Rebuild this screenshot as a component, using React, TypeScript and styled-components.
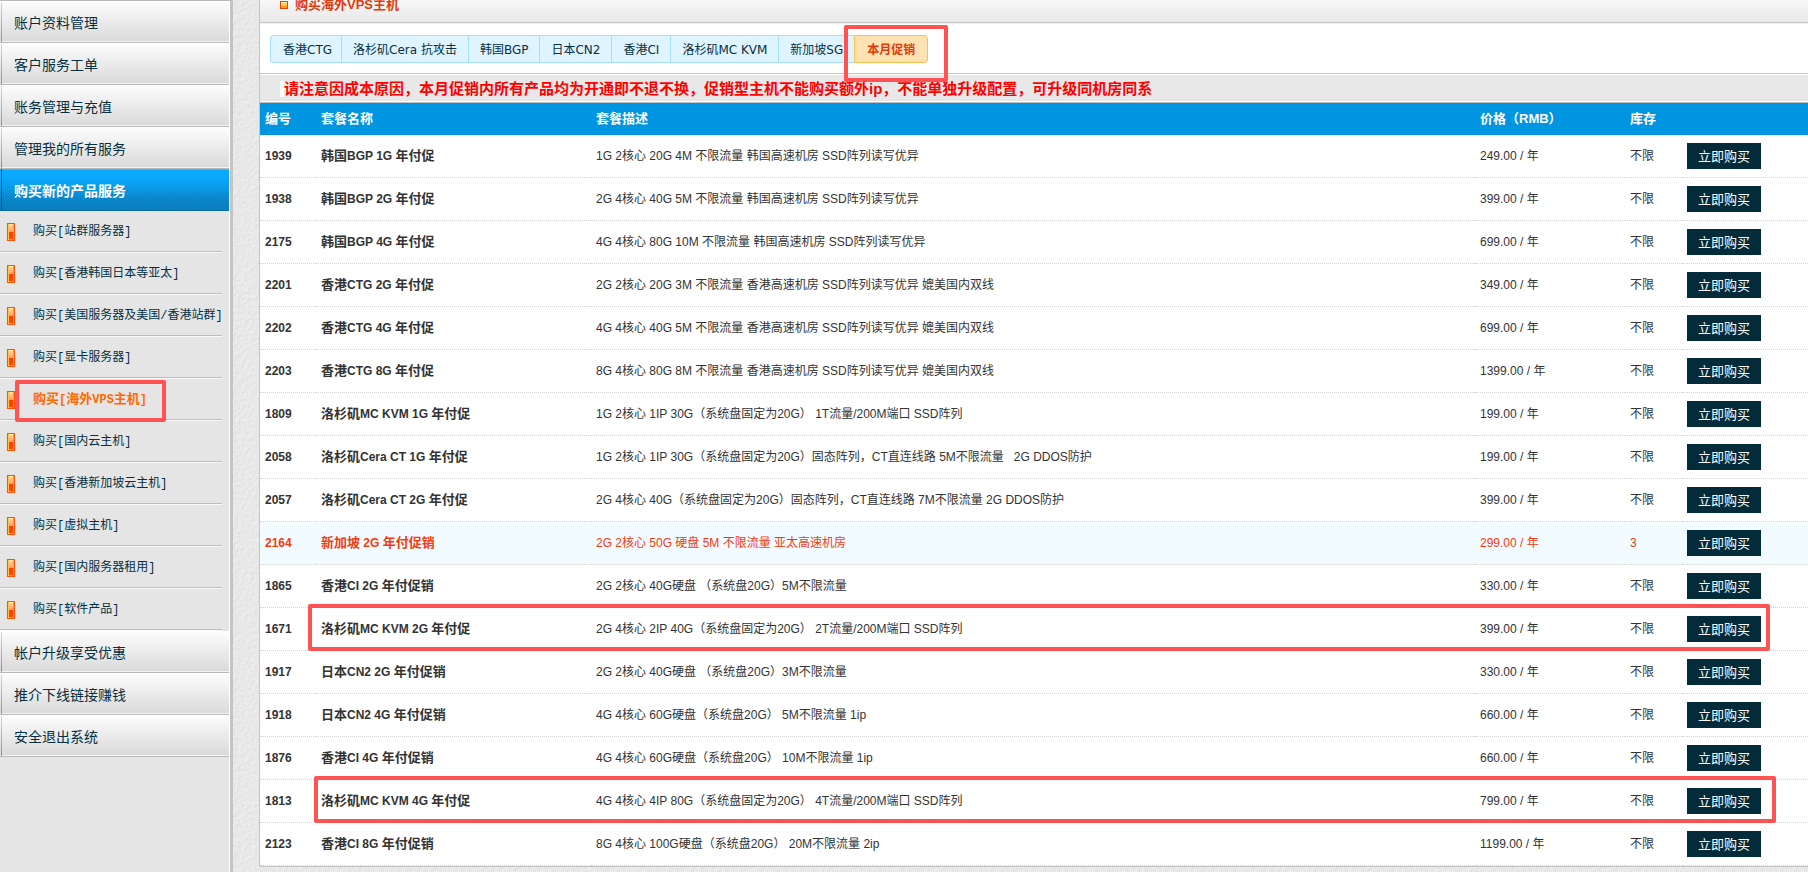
import React from 'react';
import styled, { createGlobalStyle, css } from 'styled-components';

const latin = '"Liberation Sans", "Noto Sans CJK SC", sans-serif';
const cjk = '"Noto Sans CJK SC", sans-serif';

const GlobalStyle = createGlobalStyle`
  * { box-sizing: border-box; }
  html, body, #root { min-height: 100vh; }
  body {
    margin: 0;
    background: #e8e8e8;
    color: #333;
    font: 12px/20px ${latin};
    overflow-x: hidden;
  }
  a { color: inherit; text-decoration: none; }
`;

const Page = styled.div`
  position: relative;
  display: flex;
  align-items: stretch;
  min-height: 100vh;
`;

const Texture = styled.svg`
  position: absolute;
  inset: 0;
  width: 100%;
  height: 100%;
  z-index: -1;
`;

const Sidebar = styled.aside`
  flex: none;
  width: 233px;
  background: #e5e5e5;
  border-top: 1px solid #b9b9b9;
  border-right: 3px solid #c4c4c4;
  box-shadow: inset -1px 0 #fff;
  padding-right: 1px;
`;

const NavLink = styled.a<{ $active?: boolean }>`
  position: relative;
  display: flex;
  align-items: center;
  height: 42px;
  padding-left: 14px;
  color: #06303f;
  font: 14px/20px ${cjk};
  background: linear-gradient(#fdfdfd, #d9d9d9);
  border-bottom: 1px solid #b9b9b9;
  box-shadow: inset 0 -1px #f4f4f4, inset 0 1px #fff;

  &::before {
    content: '';
    position: absolute;
    left: 1px;
    top: 1px;
    bottom: 0;
    width: 1px;
    background: linear-gradient(#b8e0f4, #4aa5dc);
  }

  ${(p) => p.$active && css`
    color: #fff;
    font-weight: bold;
    background:
      linear-gradient(#09aaff 15%, rgba(9, 170, 255, 0) 70%),
      linear-gradient(135deg, transparent 40%, rgba(0, 50, 100, 0.24) 40% 60%, transparent 60%) 0 0 / 3px 3px,
      linear-gradient(#0ba6f8, #0a84c6);
    border-bottom-color: #0b6ca5;
    box-shadow: inset 0 1px #2cc3f5;
    &::before { background: #0b3be0; top: 0; }
  `}
`;

const SubList = styled.ul`
  list-style: none;
  margin: 0;
  padding: 0 7px 0 0;
`;

const SubItem = styled.li`
  position: relative;
  height: 42px;
  border-bottom: 1px solid #f8f8f8;
  box-shadow: inset 0 -1px #bdbdbd;
`;

const SubLink = styled.a<{ $active?: boolean }>`
  display: flex;
  align-items: center;
  gap: 18px;
  height: 41px;
  padding-left: 7px;
  white-space: nowrap;
  font: 12px/20px "Liberation Mono", "Noto Sans CJK SC", monospace;
  font-weight: ${(p) => (p.$active ? 'bold' : 'normal')};
  color: ${(p) => (p.$active ? '#ff6a00' : '#06303f')};
`;

const Bullet = styled.i`
  flex: none;
  width: 8px;
  height: 18px;
  border: 1px solid #ff5500;
  background: linear-gradient(#ffd9b0, #ff9a66 50%, #ff3c00 50%, #ff4a00);
  box-shadow: inset 1px 0 #ffc33c, inset -1px 0 #ffa030, inset 0 1px #fff0a0, inset 0 -1px #ffa010;
`;

const SubText = styled.span`
  padding-top: 1px;
`;

const Mark = styled.span<{ $top: number; $bottom: number; $left: number; $right: number }>`
  position: absolute;
  top: ${(p) => p.$top}px;
  bottom: ${(p) => p.$bottom}px;
  left: ${(p) => p.$left}px;
  right: ${(p) => p.$right}px;
  border: 4px solid #ff5353;
  border-radius: 2px;
  pointer-events: none;
  z-index: 2;
`;

const Main = styled.main`
  flex: 1;
  min-width: 0;
  margin-left: 26px;
  align-self: flex-start;
  background: #fff;
  border-left: 1px solid #c4c4c4;
  border-bottom: 1px solid #c4c4c4;
`;

const TitleBar = styled.header`
  display: flex;
  align-items: flex-start;
  gap: 7px;
  height: 23px;
  padding-left: 20px;
  background: linear-gradient(#f7f7f7, #e8e8e8);
  border-bottom: 1px solid #c6c6c6;
  box-shadow: 0 1px #f0f0f0;
`;

const TitleIcon = styled.i`
  width: 8px;
  height: 8px;
  margin-top: 1px;
  border: 1px solid #d9480f;
  background: #ffc94a;
  box-shadow: inset 0 -2px #ff9a1a, inset 0 1px #fff0b0;
`;

const Title = styled.h1`
  margin: 0;
  font: bold 13px/10px ${latin};
  color: #e23a0b;
`;

const Tabs = styled.nav`
  display: flex;
  padding: 12px 10px 10px;
`;

const Tab = styled.a<{ $active?: boolean }>`
  position: relative;
  height: 28px;
  padding: 1px 11px 0;
  font: 12px/26px "DejaVu Sans", "Noto Sans CJK SC", sans-serif;
  white-space: nowrap;
  color: #06303f;
  background: #def4ff;
  border: 1px solid #a5dffb;
  border-right-width: 0;
  &:first-child { border-radius: 4px 0 0 4px; padding: 1px 9px 0 12px; }
  &:last-child { border-radius: 0 4px 4px 0; border-right-width: 1px; }

  ${(p) => p.$active && css`
    padding: 1px 12px 0;
    color: #e23a0b;
    font-weight: bold;
    background: #ffe2b2;
    border-color: #ffbd50;
  `}
`;

const Notice = styled.p`
  margin: 0;
  height: 30px;
  padding: 1px 0 0 20px;
  background: #e8e8e8;
  border-top: 1px solid #c4c4c4;
  border-bottom: 1px solid #bdbdbd;
  box-shadow: inset 0 1px #fff, inset 0 -1px #fff;
  font: bold 15px/27px ${latin};
  color: #f00;
  white-space: pre;
  display: flex;
  align-items: center;
`;

const NoticePad = styled.span`
  width: 4px;
  height: 16px;
  background: #fff;
`;

const Table = styled.table`
  width: 100%;
  table-layout: fixed;
  border-collapse: separate;
  border-spacing: 0;
`;

const Col = styled.col<{ $w?: number }>`
  ${(p) => p.$w && `width: ${p.$w}px;`}
`;

const Th = styled.th`
  height: 32px;
  padding: 0 5px;
  text-align: left;
  font: bold 13px/20px ${latin};
  color: #fff;
  background: #0095e0;
`;

const Row = styled.tr<{ $hot?: boolean }>`
  position: relative;
  color: ${(p) => (p.$hot ? '#f43b10' : '#333')};
  background: ${(p) => (p.$hot ? '#f2fbff' : '#fff')};
`;

const Td = styled.td<{ $bold?: boolean }>`
  height: 43px;
  padding: 0 5px;
  border-bottom: 1px dotted #d4d4d4;
  font-weight: ${(p) => (p.$bold ? 'bold' : 'normal')};
  white-space: pre;
`;

const Wide = styled.span`
  font-size: 13px;
`;

const Buy = styled.button`
  display: block;
  width: 74px;
  height: 26px;
  padding: 0;
  border: 0;
  background: #032b3a;
  color: #fff;
  font: 13px/20px ${cjk};
  cursor: pointer;
`;

type Plan = [id: string, name: string, desc: string, price: string, stock?: string];

const plans: Plan[] = [
  ['1939', '韩国BGP 1G 年付促', '1G 2核心 20G 4M 不限流量 韩国高速机房 SSD阵列读写优异', '249.00'],
  ['1938', '韩国BGP 2G 年付促', '2G 4核心 40G 5M 不限流量 韩国高速机房 SSD阵列读写优异', '399.00'],
  ['2175', '韩国BGP 4G 年付促', '4G 4核心 80G 10M 不限流量 韩国高速机房 SSD阵列读写优异', '699.00'],
  ['2201', '香港CTG 2G 年付促', '2G 2核心 20G 3M 不限流量 香港高速机房 SSD阵列读写优异 媲美国内双线', '349.00'],
  ['2202', '香港CTG 4G 年付促', '4G 4核心 40G 5M 不限流量 香港高速机房 SSD阵列读写优异 媲美国内双线', '699.00'],
  ['2203', '香港CTG 8G 年付促', '8G 4核心 80G 8M 不限流量 香港高速机房 SSD阵列读写优异 媲美国内双线', '1399.00'],
  ['1809', '洛杉矶MC KVM 1G 年付促', '1G 2核心 1IP 30G（系统盘固定为20G） 1T流量/200M端口 SSD阵列', '199.00'],
  ['2058', '洛杉矶Cera CT 1G 年付促', '1G 2核心 1IP 30G（系统盘固定为20G）固态阵列，CT直连线路 5M不限流量   2G DDOS防护', '199.00'],
  ['2057', '洛杉矶Cera CT 2G 年付促', '2G 4核心 40G（系统盘固定为20G）固态阵列，CT直连线路 7M不限流量 2G DDOS防护', '399.00'],
  ['2164', '新加坡 2G 年付促销', '2G 2核心 50G 硬盘 5M 不限流量 亚太高速机房', '299.00', '3'],
  ['1865', '香港CI 2G 年付促销', '2G 2核心 40G硬盘 （系统盘20G）5M不限流量', '330.00'],
  ['1671', '洛杉矶MC KVM 2G 年付促', '2G 4核心 2IP 40G（系统盘固定为20G） 2T流量/200M端口 SSD阵列', '399.00'],
  ['1917', '日本CN2 2G 年付促销', '2G 2核心 40G硬盘 （系统盘20G）3M不限流量', '330.00'],
  ['1918', '日本CN2 4G 年付促销', '4G 4核心 60G硬盘（系统盘20G） 5M不限流量 1ip', '660.00'],
  ['1876', '香港CI 4G 年付促销', '4G 4核心 60G硬盘（系统盘20G） 10M不限流量 1ip', '660.00'],
  ['1813', '洛杉矶MC KVM 4G 年付促', '4G 4核心 4IP 80G（系统盘固定为20G） 4T流量/200M端口 SSD阵列', '799.00'],
  ['2123', '香港CI 8G 年付促销', '8G 4核心 100G硬盘（系统盘20G） 20M不限流量 2ip', '1199.00'],
];

// Distance of a highlight frame from the row's left and right edges.
const marked: Record<string, [left: number, right: number]> = {
  '1671': [48, 38],
  '1813': [54, 32],
};

const menuTop = ['账户资料管理', '客户服务工单', '账务管理与充值', '管理我的所有服务'];
const menuBottom = ['帐户升级享受优惠', '推介下线链接赚钱', '安全退出系统'];
const products = [
  '站群服务器', '香港韩国日本等亚太', '美国服务器及美国/香港站群', '显卡服务器', '海外VPS主机',
  '国内云主机', '香港新加坡云主机', '虚拟主机', '国内服务器租用', '软件产品',
];
const tabs = ['香港CTG', '洛杉矶Cera 抗攻击', '韩国BGP', '日本CN2', '香港CI', '洛杉矶MC KVM', '新加坡SG', '本月促销'];

// In bold text, Chinese runs are set one step larger than the Latin ones.
function BoldText({ text }: { text: string }) {
  return (
    <>
      {text.split(/([\u4e00-\u9fff]+)/).map((run, i) => (i % 2 ? <Wide key={i}>{run}</Wide> : run))}
    </>
  );
}

export default function App() {
  return (
    <>
      <GlobalStyle />
      <Page>
        <Texture aria-hidden="true">
          <filter id="paper" x="0" y="0" width="100%" height="100%" colorInterpolationFilters="sRGB">
            <feTurbulence type="fractalNoise" baseFrequency="0.3" numOctaves="3" />
            <feDiffuseLighting lightingColor="#ffffff" surfaceScale="0.15" diffuseConstant="1.05">
              <feDistantLight azimuth="225" elevation="60" />
            </feDiffuseLighting>
          </filter>
          <rect width="100%" height="100%" filter="url(#paper)" />
        </Texture>
        <Sidebar>
          {menuTop.map((m) => <NavLink href="#" key={m}>{m}</NavLink>)}
          <NavLink href="#" $active>购买新的产品服务</NavLink>
          <SubList>
            {products.map((p) => {
              const active = p === '海外VPS主机';
              const label = `购买[${p}]`;
              return (
                <SubItem key={p}>
                  <SubLink href="#" $active={active}>
                    <Bullet />
                    <SubText>{active ? <BoldText text={label} /> : label}</SubText>
                  </SubLink>
                  {active && <Mark $top={1} $bottom={-2} $left={15} $right={56} />}
                </SubItem>
              );
            })}
          </SubList>
          {menuBottom.map((m) => <NavLink href="#" key={m}>{m}</NavLink>)}
        </Sidebar>
        <Main>
          <TitleBar>
            <TitleIcon />
            <Title>购买海外VPS主机</Title>
          </TitleBar>
          <Tabs>
            {tabs.map((t) => {
              const active = t === '本月促销';
              return (
                <Tab href="#" key={t} $active={active}>
                  {t}
                  {active && <Mark $top={-11} $bottom={-20} $left={-11} $right={-21} />}
                </Tab>
              );
            })}
          </Tabs>
          <Notice>
            <NoticePad />
            <span>请注意因成本原因，本月促销内所有产品均为开通即不退不换，促销型主机不能购买额外ip，不能单独升级配置，可升级同机房同系</span>
          </Notice>
          <Table>
            <colgroup>
              <Col $w={56} />
              <Col $w={275} />
              <Col />
              <Col $w={150} />
              <Col $w={57} />
              <Col $w={126} />
            </colgroup>
            <thead>
              <tr>
                <Th>编号</Th>
                <Th>套餐名称</Th>
                <Th>套餐描述</Th>
                <Th>价格（RMB）</Th>
                <Th>库存</Th>
                <Th />
              </tr>
            </thead>
            <tbody>
              {plans.map(([id, name, desc, price, stock]) => (
                <Row key={id} $hot={Boolean(stock)}>
                  <Td $bold>{id}</Td>
                  <Td $bold><BoldText text={name} /></Td>
                  <Td>{desc}</Td>
                  <Td>{price} / 年</Td>
                  <Td>{stock ?? '不限'}</Td>
                  <Td>
                    <Buy type="button">立即购买</Buy>
                    {marked[id] && (
                      <Mark $top={-4} $bottom={0} $left={marked[id][0]} $right={marked[id][1]} />
                    )}
                  </Td>
                </Row>
              ))}
            </tbody>
          </Table>
        </Main>
      </Page>
    </>
  );
}
